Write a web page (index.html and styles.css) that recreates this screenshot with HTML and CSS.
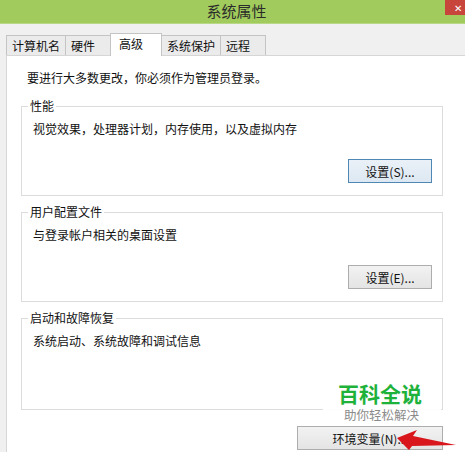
FILE: index.html
```html
<!DOCTYPE html>
<html lang="zh-CN">

<head>
    <meta charset="UTF-8">
    <title>系统属性</title>
    <link rel="stylesheet" href="styles.css">
</head>

<body>
    <div class="window">
        <div class="titlebar">
            <span class="title">系统属性</span>
            <span class="close">✕</span>
        </div>

        <!-- Tabs -->
        <div class="tabs">
            <div class="tab">计算机名</div>
            <div class="tab">硬件</div>
            <div class="tab selected">高级</div>
            <div class="tab">系统保护</div>
            <div class="tab">远程</div>
        </div>

        <div class="panel">
            <p class="intro">要进行大多数更改，你必须作为管理员登录。</p>

            <fieldset class="group">
                <legend>性能</legend>
                <p class="desc">视觉效果，处理器计划，内存使用，以及虚拟内存</p>
                <div class="actions"><button class="btn focused">设置(S)...</button></div>
            </fieldset>

            <fieldset class="group">
                <legend>用户配置文件</legend>
                <p class="desc">与登录帐户相关的桌面设置</p>
                <div class="actions"><button class="btn">设置(E)...</button></div>
            </fieldset>

            <fieldset class="group last">
                <legend>启动和故障恢复</legend>
                <p class="desc">系统启动、系统故障和调试信息</p>
            </fieldset>

            <div class="bottom-actions"><button class="btn wide">环境变量(N)...</button></div>
        </div>

        <!-- watermark + arrow drawn over the dialog -->
        <div class="watermark">
            <div class="wm-title">百科全说</div>
            <div class="wm-sub">助你轻松解决</div>
        </div>
        <svg class="arrow" width="465" height="452" viewBox="0 0 465 452">
            <polygon points="397,438 417,430 413,436 456,445 412,446 409,450" fill="#d8161b" />
        </svg>
    </div>
</body>

</html>
```

FILE: styles.css
```css
* {
    box-sizing: border-box;
}

body {
    margin: 0;
    font-family: "Noto Sans CJK SC", "Noto Sans", sans-serif;
    font-size: 12px;
    color: #111;
}

.window {
    position: relative;
    width: 465px;
    height: 452px;
    overflow: hidden;
    background-color: #f0f0f0;
}

.titlebar {
    display: flex;
    height: 24px;
    background-color: #a1cb5c;
    border-bottom: 1px solid #b7d886;
}

.title {
    flex: 1;
    padding-left: 28px;
    text-align: center;
    font-size: 15px;
    line-height: 22px;
    color: #2b2b2b;
}

.close {
    flex-shrink: 0;
    width: 20px;
    height: 15px;
    padding-left: 9px;
    background-color: #c8453b;
    color: white;
    font-size: 10px;
    line-height: 15px;
}

.tabs {
    display: flex;
    align-items: flex-end;
    height: 31px;
    padding: 9px 0 0 6px;
}

.tab {
    height: 20px;
    min-width: 46px;
    padding: 0 5px;
    border: 1px solid #c4c4c4;
    border-bottom: none;
    background-color: #ebebeb;
    line-height: 19px;
}

.tab + .tab {
    margin-left: -1px;
}

.tab.selected {
    position: relative;
    z-index: 1;
    width: 52px;
    height: 23px;
    margin-bottom: -1px;
    padding: 0 8px;
    background-color: white;
    line-height: 20px;
}

.panel {
    height: 400px;
    margin: 0 -20px 0 6px;
    padding: 0 0 0 14px;
    background-color: white;
    border-left: 1px solid #d6d6d6;
    border-top: 1px solid #d6d6d6;
}

.intro {
    margin: 14px 0 12px 6px;
    line-height: 16px;
}

.group {
    width: 422px;
    margin: 0;
    padding: 0 6px 12px;
    border: 1px solid #dcdcdc;
    min-inline-size: 0;
}

.group + .group {
    margin-top: 8px;
}

.group.last {
    padding-bottom: 60px;
}

.group legend {
    padding: 0 2px;
    line-height: 16px;
}

.desc {
    margin: 7px 0 0 5px;
    line-height: 16px;
}

.actions {
    display: flex;
    justify-content: flex-end;
    margin-top: 22px;
    padding-right: 4px;
}

.btn {
    width: 84px;
    height: 24px;
    padding: 0;
    border: 1px solid #adadad;
    background: linear-gradient(#f2f2f2, #e4e4e4);
    font-family: inherit;
    font-size: 12px;
    color: #111;
}

.btn.focused {
    border-color: #4f87b5;
    background: linear-gradient(#eaf1f8, #dde8f2);
}

.bottom-actions {
    display: flex;
    justify-content: flex-end;
    width: 422px;
    margin-top: 16px;
}

.btn.wide {
    width: 146px;
}

.watermark {
    position: absolute;
    left: 323px;
    top: 372px;
    width: 118px;
    height: 50px;
    padding: 10px 0 0 15px;
    background-color: rgba(255, 255, 255, 0.92);
}

.wm-title {
    font-size: 21px;
    font-weight: bold;
    line-height: 22px;
    color: #1fb23b;
}

.wm-sub {
    margin: 4px 0 0 6px;
    font-size: 12.5px;
    line-height: 14px;
    color: #8b8b8b;
}

.arrow {
    position: absolute;
    left: 0;
    top: 0;
    pointer-events: none;
}
```
